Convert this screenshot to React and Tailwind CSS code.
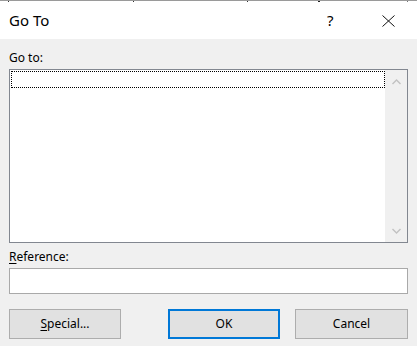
import React from 'react'

const font = { fontFamily: '"Noto Sans", "Open Sans", Arial, sans-serif' }

function Chevron({ up }) {
  return (
    <svg width="9" height="6" viewBox="0 0 9 6" className="block">
      <path
        d={up ? 'M0.5 5 L4.5 1 L8.5 5' : 'M0.5 1 L4.5 5 L8.5 1'}
        fill="none"
        stroke="#c2c2c2"
        strokeWidth="1.4"
      />
    </svg>
  )
}

export default function App() {
  return (
    <div className="w-[417px] h-[346px] bg-[#f0f0f0] overflow-hidden text-black" style={font}>
      {/* what is behind the dialog */}
      <div className="relative h-[2px] bg-white border-t border-[#9a9a9a]">
        <div className="absolute left-[8px] top-0 w-px h-[1px] bg-[#333]" />
        <div className="absolute left-[133px] top-0 w-px h-[1px] bg-[#333]" />
        <div className="absolute left-[247px] top-0 w-px h-[1px] bg-[#333]" />
        <div className="absolute left-[318px] top-0 w-[2px] h-[1px] bg-[#222]" />
        <div className="absolute left-[407px] top-0 w-px h-[1px] bg-[#777]" />
      </div>

      {/* title bar */}
      <div className="h-[37px] bg-white flex items-center pl-[9px] pr-[22px]">
        <span className="text-[15px] leading-none flex-1">Go To</span>
        <span className="text-[15px] leading-none w-[10px] mr-[45px]">?</span>
        <svg width="13" height="12" viewBox="0 0 13 12">
          <path d="M0.5 0.5 L12.5 11.5 M12.5 0.5 L0.5 11.5" stroke="#111" strokeWidth="1" fill="none" />
        </svg>
      </div>

      {/* body */}
      <div className="px-[9px] pt-[11px]">
        <div className="text-[12px] leading-[16px]">Go to:</div>

        <div className="mt-[3px] h-[174px] border border-[#828790] bg-white flex">
          <div className="flex-1 pt-px pl-px">
            <div className="h-[17px] border border-dotted border-black" />
          </div>
          <div className="w-[22px] bg-[#f0f0f0] flex flex-col items-center justify-between pt-[9px] pb-[8px]">
            <Chevron up />
            <Chevron />
          </div>
        </div>

        <div className="mt-[6px] text-[12px] leading-[16px]">
          <span className="underline underline-offset-2">R</span>eference:
        </div>
        <div className="mt-[3px] h-[26px] border border-[#a9a9a9] bg-white" />

        <div className="mt-[15px] flex text-[12px]">
          <button className="w-[112px] h-[30px] bg-[#e1e1e1] border border-[#adadad] flex items-center justify-center">
            <span><span className="underline underline-offset-2">S</span>pecial...</span>
          </button>
          <button className="ml-[47px] w-[112px] h-[30px] bg-[#e1e1e1] border-2 border-[#0078d7] flex items-center justify-center">
            OK
          </button>
          <button className="ml-[15px] w-[113px] h-[30px] bg-[#e1e1e1] border border-[#adadad] flex items-center justify-center">
            Cancel
          </button>
        </div>
      </div>
    </div>
  )
}
